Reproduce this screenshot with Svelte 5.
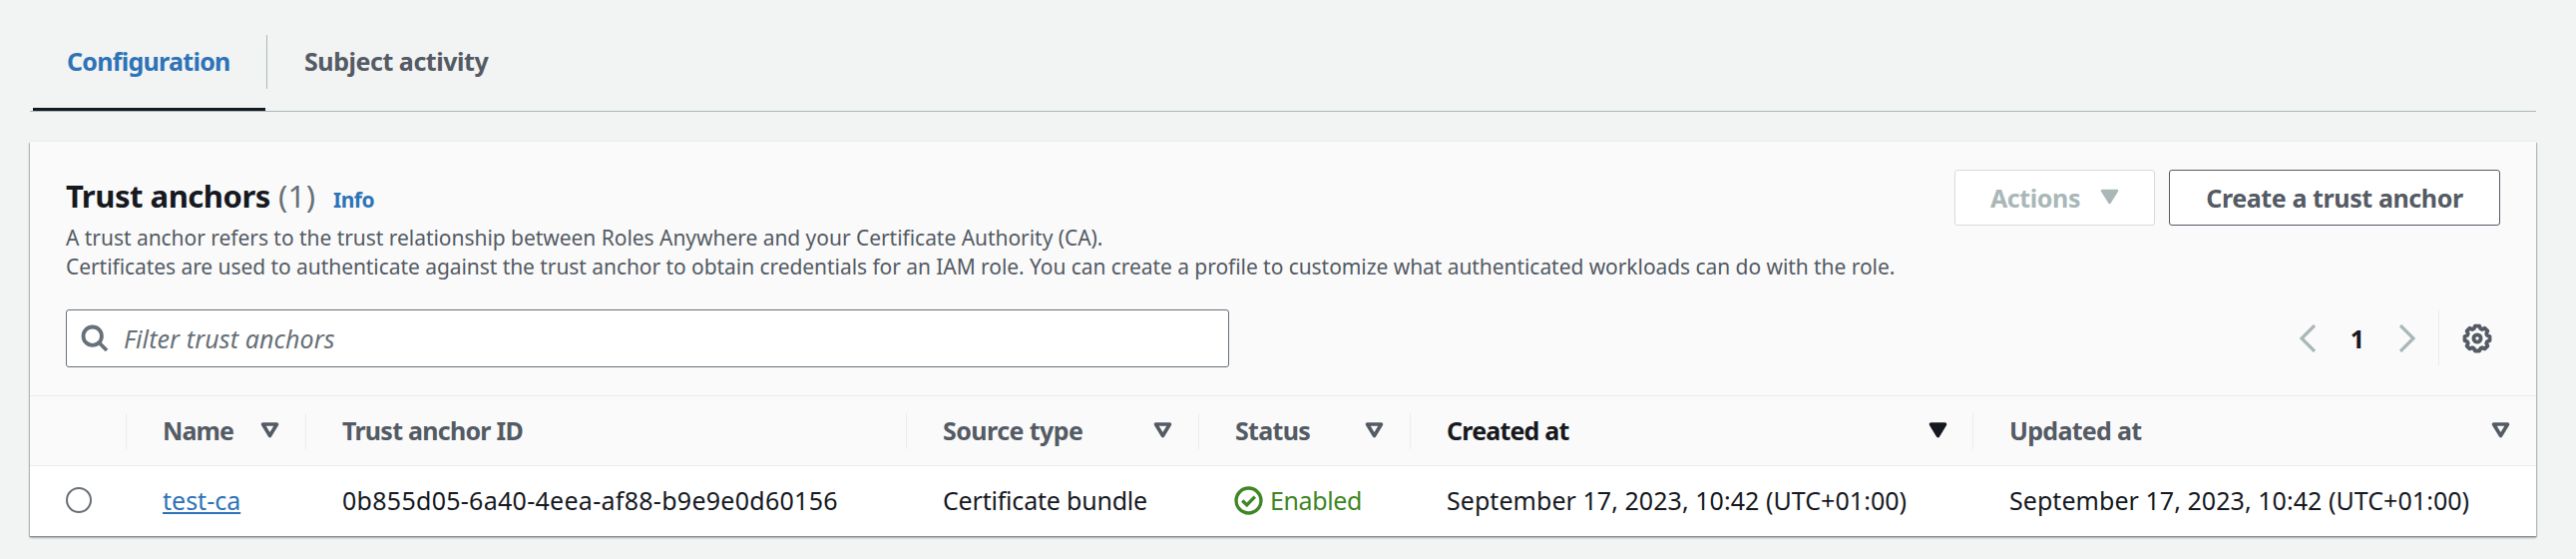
<script>
  const tabs = [
    { label: 'Configuration', active: true, ls: -0.72 },
    { label: 'Subject activity', active: false, ls: -0.45 }
  ];
  const columns = [
    { label: 'Name', sort: 'none', ls: -0.9 },
    { label: 'Trust anchor ID', sort: '', ls: -0.75 },
    { label: 'Source type', sort: 'none', ls: -0.55 },
    { label: 'Status', sort: 'none', ls: -0.7 },
    { label: 'Created at', sort: 'active', ls: -0.8 },
    { label: 'Updated at', sort: 'none', ls: -0.7 }
  ];
  const date = 'September 17, 2023, 10:42 (UTC+01:00)';
</script>

<main>
  <nav>
    {#each tabs as tab}
      <div class="tab" class:active={tab.active}>
        <span style="letter-spacing:{tab.ls}px">{tab.label}</span>
      </div>
    {/each}
  </nav>

  <section class="card">
    <header>
      <div class="top">
        <h2><span class="name">Trust anchors</span><span class="count">(1)</span><a class="info">Info</a></h2>
        <div class="buttons">
          <button class="disabled">
            <span>Actions</span>
            <svg width="19" height="16" viewBox="0 0 19 16"><path d="M2 2h15l-7.5 12z" fill="currentColor" stroke="currentColor" stroke-width="2.5" stroke-linejoin="round" /></svg>
          </button>
          <button class="create">Create a trust anchor</button>
        </div>
      </div>
      <p>
        <span class="d1">A trust anchor refers to the trust relationship between Roles Anywhere and your Certificate Authority (CA).</span><br />
        <span class="d2">Certificates are used to authenticate against the trust anchor to obtain credentials for an IAM role. You can create a profile to customize what authenticated workloads can do with the role.</span>
      </p>
      <div class="tools">
        <div class="search">
          <svg width="28" height="28" viewBox="0 0 28 28" fill="none" stroke="currentColor" stroke-width="3.8"><circle cx="11.7" cy="11.7" r="9.2" /><path d="M18 18l8 8" /></svg>
          <span>Filter trust anchors</span>
        </div>
        <div class="pager">
          <svg class="chev" width="18" height="28" viewBox="0 0 18 28"><path d="M16 1L3 14l13 13" /></svg>
          <b>1</b>
          <svg class="chev" width="18" height="28" viewBox="0 0 18 28"><path d="M2 1l13 13L2 27" /></svg>
          <i></i>
          <svg class="gear" width="30" height="30" viewBox="0 0 30 30" fill="none" stroke="currentColor" stroke-width="3.8" stroke-linejoin="round">
            <path d="M12.8 2.6h4.4l1.1 2.7 1.6.7 2.7-1.2 2.8 2.8-1.2 2.7.7 1.6 2.6 1v4.3l-2.6 1.1-.7 1.6 1.2 2.7-2.8 2.8-2.7-1.2-1.6.7-1.1 2.6h-4.4l-1.1-2.6-1.6-.7-2.7 1.2-2.8-2.8 1.2-2.7-.7-1.6-2.6-1.1v-4.3l2.6-1 .7-1.6-1.2-2.7 2.8-2.8 2.7 1.2 1.6-.7z" />
            <circle cx="15" cy="15" r="3.6" />
          </svg>
        </div>
      </div>
    </header>

    <div class="grid head">
      <div class="cell"></div>
      {#each columns as c}
        <div class="cell" class:sorted={c.sort === 'active'}>
          <span style="letter-spacing:{c.ls}px">{c.label}</span>
          {#if c.sort}
            <svg width="19" height="16" viewBox="0 0 19 16"><path d="M2.5 2h14l-7 11.5z" fill={c.sort === 'active' ? 'currentColor' : 'none'} stroke="currentColor" stroke-width="3.6" stroke-linejoin="round" /></svg>
          {/if}
        </div>
      {/each}
    </div>

    <div class="grid row">
      <div class="cell radio"><i></i></div>
      <div class="cell"><a class="link">test-ca</a></div>
      <div class="cell id">0b855d05-6a40-4eea-af88-b9e9e0d60156</div>
      <div class="cell bundle">Certificate bundle</div>
      <div class="cell status">
        <svg width="29" height="29" viewBox="0 0 30 30" fill="none" stroke="currentColor" stroke-width="3.5"><circle cx="15" cy="15" r="12.9" /><path d="M8.5 15l4.7 4.5 8.3-8.5" /></svg>
        <span>Enabled</span>
      </div>
      <div class="cell date">{date}</div>
      <div class="cell date">{date}</div>
    </div>
  </section>
</main>

<style>
  :global(body) { margin: 0; background: #f2f3f3; }
  main {
    box-sizing: border-box;
    height: 560px;
    padding: 0 40px 0 30px;
    font-family: "Noto Sans", "Open Sans", sans-serif;
    font-size: 25px;
    color: #16191f;
    white-space: nowrap;
  }
  nav {
    display: flex;
    box-sizing: border-box;
    height: 112px;
    padding: 15px 0 0 3px;
    border-bottom: 1px solid #aab7b8;
  }
  .tab {
    display: flex;
    align-items: center;
    box-sizing: border-box;
    height: 96px;
    font-weight: 700;
    color: #545b64;
  }
  .tab.active {
    width: 233px;
    padding: 0 0 2px 34px;
    color: #2e73b8;
    border-bottom: 3px solid #16191f;
  }
  .tab + .tab {
    height: 54px;
    margin: 20px 0 0 1px;
    padding: 0 0 2px 37px;
    border-left: 1px solid #aab7b8;
  }
  .card {
    margin-top: 30px;
    height: 395px;
    background: #fff;
    box-shadow: 0 1px 0 0 #879196, 0 2px 2px 0 rgba(0, 28, 36, .3), 1px 1px 1px 0 rgba(0, 28, 36, .2), -1px 1px 1px 0 rgba(0, 28, 36, .2), 0 -1px 0 #eaeded;
  }
  header {
    box-sizing: border-box;
    height: 254px;
    padding: 28px 36px 0;
    background: #fafafa;
  }
  .top { display: flex; justify-content: space-between; height: 56px; }
  h2 { display: flex; align-items: baseline; margin: 0; font-size: 31px; line-height: 53px; }
  .name { width: 213px; letter-spacing: -.48px; }
  .count { width: 55px; font-weight: 400; color: #687078; letter-spacing: .3px; }
  .info { font-size: 21px; color: #2e73b8; letter-spacing: -.5px; }
  .buttons { display: flex; gap: 14px; }
  button {
    display: flex;
    align-items: center;
    justify-content: center;
    box-sizing: border-box;
    height: 56px;
    padding: 0 0 1px;
    border: 1px solid #545b64;
    border-radius: 3px;
    background: #fff;
    color: #545b64;
    font: 700 25px "Noto Sans", sans-serif;
  }
  .create { width: 332px; letter-spacing: -.4px; }
  .disabled { width: 201px; gap: 20px; border-color: #d5dbdb; color: #aab7b8; letter-spacing: -.4px; }
  .disabled svg { margin-top: -1px; }
  p { margin: -2px 0 0; font-size: 21px; line-height: 29px; color: #545b64; }
  .d1 { letter-spacing: -.04px; }
  .d2 { letter-spacing: -.06px; }
  .tools { display: flex; justify-content: space-between; margin-top: 28px; }
  .search {
    display: flex;
    align-items: center;
    gap: 15px;
    box-sizing: border-box;
    width: 1166px;
    height: 58px;
    padding-left: 14px;
    border: 1px solid #687078;
    border-radius: 3px;
    background: #fff;
    color: #687078;
  }
  .search span { font-style: italic; letter-spacing: .1px; padding-bottom: 1px; }
  .pager { display: flex; align-items: center; padding-right: 8px; }
  .chev { fill: none; stroke: #aab7b8; stroke-width: 3.2; }
  .pager b { width: 82px; text-align: center; }
  .pager i { width: 1px; height: 56px; margin: 0 23px 0 22px; background: #eaeded; }
  .gear { color: #545b64; }
  .grid { display: grid; grid-template-columns: 97px 180px 602px 293px 212px 564px 564px; }
  .head { box-sizing: border-box; height: 71px; border: solid #eaeded; border-width: 1px 0; background: #fafafa; align-items: center; }
  .cell { display: flex; align-items: center; box-sizing: border-box; padding: 0 0 2px 36px; }
  .head .cell {
    justify-content: space-between;
    height: 36px;
    padding-right: 26px;
    border-right: 1px solid #eaeded;
    font-weight: 700;
    color: #545b64;
  }
  .head .cell:last-child { border: 0; }
  .head .cell.sorted { padding-right: 25px; color: #16191f; }
  .row { height: 70px; }
  .radio i { width: 26px; height: 26px; box-sizing: border-box; border: 2px solid #687078; border-radius: 50%; }
  .link { color: #2e73b8; text-decoration: underline; text-decoration-thickness: 2px; text-underline-offset: 2px; }
  .id { letter-spacing: .28px; }
  .bundle { letter-spacing: -.2px; }
  .status { padding-left: 35px; color: #3f8624; gap: 7px; letter-spacing: -.4px; }
  .date { letter-spacing: .05px; }
</style>
